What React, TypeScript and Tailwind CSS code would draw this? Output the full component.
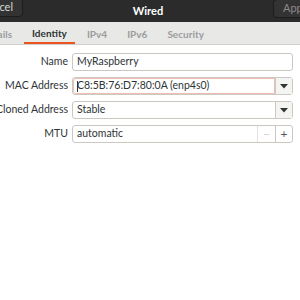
import React from "react";

const font = { fontFamily: 'Lato, "Liberation Sans", sans-serif' };

const Arrow = () => (
  <svg width="8" height="5" viewBox="0 0 8 5">
    <path d="M0 0h8L4 4.5z" fill="#2e3436" />
  </svg>
);

const Row = ({ label, children }: { label: string; children: React.ReactNode }) => (
  <div className="flex h-[18px] items-center">
    <div className="flex w-[72px] shrink-0 justify-end pr-[4px] text-[10.5px] text-[#2e3436] whitespace-nowrap">{label}</div>
    <div className="flex h-full flex-1 items-stretch">{children}</div>
  </div>
);

const App = () => {
  return (
    <div className="h-[300px] w-[300px] overflow-hidden bg-white" style={font}>
      {/* header */}
      <div className="flex h-[22px] items-start justify-between bg-[#2b2b2b]">
        <div className="ml-[-20px] mt-[-2px] flex h-[19px] w-[43px] items-center justify-end rounded-[4px] border border-[#1c1c1c] bg-[#333333] pr-[9px] text-[11px] text-[#d8d8d8]">
          Cancel
        </div>
        <div className="pt-[3px] text-[11px] font-bold text-white">Wired</div>
        <div className="mr-[-20px] mt-[-1px] flex h-[19px] w-[47px] items-center rounded-[4px] border border-[#1c1c1c] bg-[#333333] pl-[9px] text-[11px] text-[#8a8a8a]">
          Apply
        </div>
      </div>
      {/* tabs */}
      <div className="flex h-[23px] items-stretch border-b border-[#cfcfcd] bg-[#e8e8e7] text-[10px] font-bold text-[#9a9c9c]">
        <div className="ml-[-19px] flex items-center pt-[2px]">Details</div>
        <div className="ml-[12px] flex items-center border-b-[2px] border-[#e95420] px-[8px] pt-[2px] text-[#2e3436]">Identity</div>
        <div className="ml-[12px] flex items-center pt-[2px]">IPv4</div>
        <div className="ml-[20px] flex items-center pt-[2px]">IPv6</div>
        <div className="ml-[20px] flex items-center pt-[2px]">Security</div>
      </div>
      {/* form */}
      <div className="flex flex-col gap-[6px] pr-[7px] pt-[8px]">
        <Row label="Name">
          <div className="flex flex-1 items-center rounded-[3px] border border-[#cdc7c2] px-[4px] text-[10.5px] text-[#2e3436]">MyRaspberry</div>
        </Row>
        <Row label="MAC Address">
          <div className="flex flex-1 items-stretch rounded-[3px] border border-[#cdc7c2]">
            <div className="flex flex-1 items-center rounded-l-[3px] border border-[#ebc0b0] px-[3px] text-[10.5px] text-[#2e3436]">
              <span className="mr-[-1px] inline-block h-[11px] w-px bg-[#2e3436]" />C8:5B:76:D7:80:0A (enp4s0)
            </div>
            <div className="flex w-[17px] items-center justify-center border-l border-[#cdc7c2] bg-[#f4f4f3]">
              <Arrow />
            </div>
          </div>
        </Row>
        <Row label="Cloned Address">
          <div className="flex flex-1 items-stretch rounded-[3px] border border-[#cdc7c2]">
            <div className="flex flex-1 items-center px-[4px] text-[10.5px] text-[#2e3436]">Stable</div>
            <div className="flex w-[17px] items-center justify-center border-l border-[#cdc7c2] bg-[#f4f4f3]">
              <Arrow />
            </div>
          </div>
        </Row>
        <Row label="MTU">
          <div className="flex flex-1 items-stretch rounded-[3px] border border-[#cdc7c2]">
            <div className="flex flex-1 items-center px-[4px] text-[10.5px] text-[#2e3436]">automatic</div>
            <div className="flex w-[18px] items-center justify-center border-l border-[#e4e1de] text-[12px] text-[#d0d0d0]">−</div>
            <div className="flex w-[17px] items-center justify-center border-l border-[#cdc7c2] text-[12px] text-[#555]">+</div>
          </div>
        </Row>
      </div>
    </div>
  );
};

export default App;
